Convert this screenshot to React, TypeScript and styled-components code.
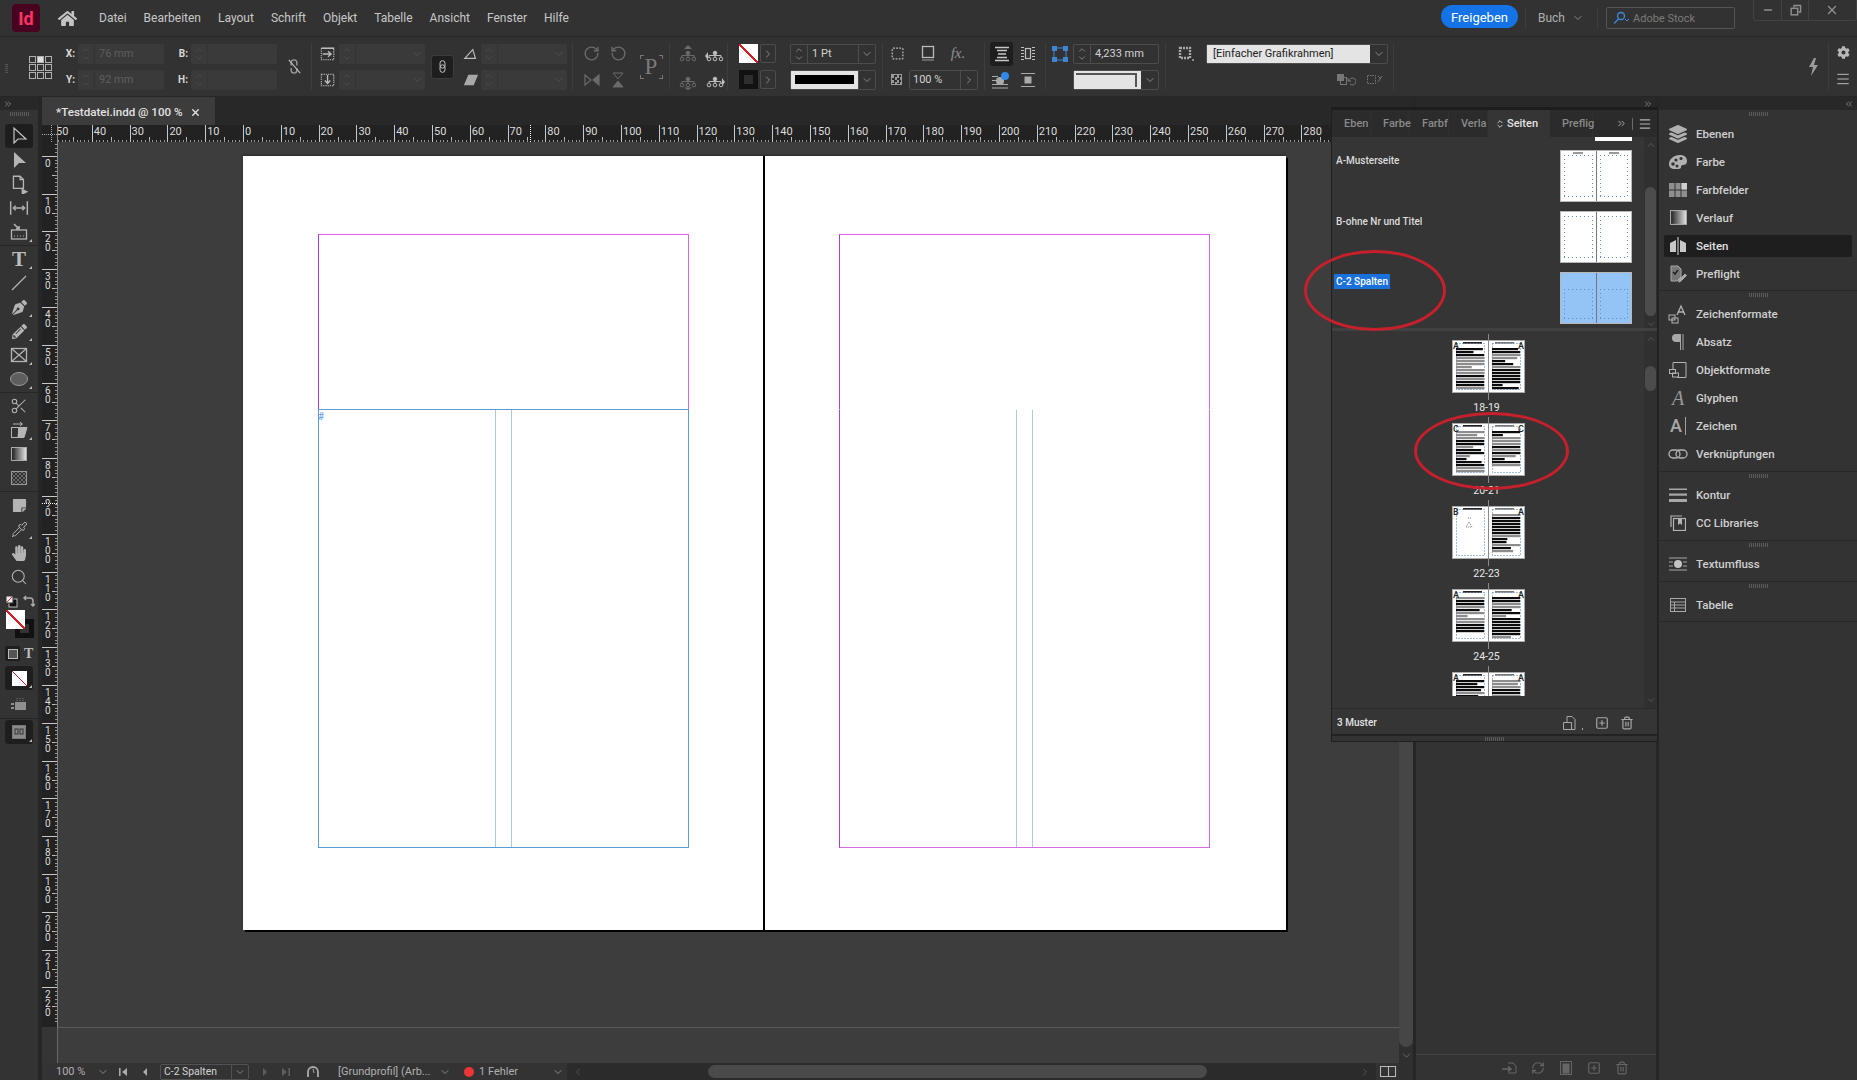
import React from "react";
import styled, { createGlobalStyle } from "styled-components";
import {
  ChevronDown,
  ChevronUp,
  ChevronRight,
  ChevronLeft,
  ChevronsRight,
  ChevronsLeft,
  ChevronsUpDown,
  Minus,
  X,
  Search,
  Scissors,
  Pipette,
  Trash2,
  SquarePlus,
  RefreshCw,
  RotateCw,
  RotateCcw,
  Menu,
} from "lucide-react";
import { FaHome, FaLayerGroup, FaPencilAlt, FaPenNib, FaHandPaper, FaStickyNote, FaCog } from "react-icons/fa";

const GlobalStyle = createGlobalStyle`
  html, body {
    margin: 0;
    height: 1080px;
    overflow: hidden;
    background: #333;
  }
  * { box-sizing: border-box; }
  #root { font-family: Roboto, "Liberation Sans", sans-serif; }
`;

const AppFrame = styled.div`
  width: 1857px;
  height: 1080px;
  display: flex;
  flex-direction: column;
  background: #333;
  color: #ccc;
`;

/* ---------- small svg helpers ---------- */
const G = ({ s = 18, children, c = "currentColor", w = 1.2 }: { s?: number; children: React.ReactNode; c?: string; w?: number }) => (
  <svg width={s} height={s} viewBox="0 0 18 18" fill="none" stroke={c} strokeWidth={w}>
    {children}
  </svg>
);

const Chev = ({ dim }: { dim?: boolean }) => <ChevronDown size={12} strokeWidth={1.4} color={dim ? "#5a5a5a" : "#aaa"} />;

/* ---------- title bar ---------- */
const TitleBar = styled.header`
  height: 37px;
  flex: none;
  display: flex;
  align-items: flex-start;
  background: #323232;
  border-bottom: 1px solid #262626;
`;
const Logo = styled.div`
  width: 28px;
  height: 28px;
  margin: 4px 0 0 12px;
  border-radius: 4px;
  background: #49021f;
  color: #ff3366;
  font-size: 18px;
  font-weight: 700;
  display: flex;
  align-items: center;
  justify-content: center;
`;
const HomeButton = styled.div`
  width: 20px;
  margin: 9px 0 0 17px;
  color: #c4c4c4;
  display: flex;
  justify-content: center;
`;
const MenuList = styled.nav`
  display: flex;
  gap: 17px;
  margin: 11px 0 0 22px;
  font-size: 12px;
  line-height: 14px;
  color: #c8c8c8;
`;
const TitleRight = styled.div`
  margin-left: auto;
  display: flex;
  align-items: flex-start;
`;
const ShareButton = styled.div`
  width: 77px;
  height: 23px;
  margin-top: 5px;
  padding-top: 1px;
  border-radius: 12px;
  background: #1473e6;
  color: #fff;
  font-size: 13px;
  display: flex;
  align-items: center;
  justify-content: center;
`;
const TitleSep = styled.div<{ $ml: number }>`
  width: 1px;
  height: 20px;
  margin: 8px 0 0 ${(p) => p.$ml}px;
  background: #3e3e3e;
`;
const Workspace = styled.div`
  margin: 11px 0 0 12px;
  width: 46px;
  display: flex;
  align-items: center;
  justify-content: space-between;
  font-size: 12px;
  line-height: 14px;
  color: #b0b0b0;
`;
const StockSearch = styled.div`
  width: 129px;
  height: 22px;
  margin: 7px 0 0 8px;
  border: 1px solid #555;
  border-radius: 2px;
  display: flex;
  align-items: center;
  gap: 4px;
  padding-left: 6px;
  font-size: 11px;
  color: #7a7a7a;
`;
const WindowButtons = styled.div`
  display: flex;
  width: 104px;
  height: 21px;
  margin-left: 18px;
  border: 1px solid #424242;
  border-top: 0;
  border-radius: 0 0 3px 3px;
  color: #8f8f8f;
`;
const WindowButton = styled.div<{ $w: number }>`
  width: ${(p) => p.$w}px;
  display: flex;
  align-items: center;
  justify-content: center;
  & + & { border-left: 1px solid #424242; }
`;

/* ---------- control bar ---------- */
const ControlBar = styled.div`
  height: 60px;
  flex: none;
  display: flex;
  background: #323232;
  border-bottom: 1px solid #262626;
  position: relative;
`;
const Section = styled.div<{ $w: number; $cols?: string; $pl?: number }>`
  width: ${(p) => p.$w}px;
  flex: none;
  padding-left: ${(p) => p.$pl ?? 0}px;
  margin: 6px 0;
  border-right: 1px solid #3d3d3d;
  display: grid;
  grid-template-columns: ${(p) => p.$cols ?? "1fr"};
  grid-auto-rows: 20px;
  row-gap: 6px;
  align-items: center;
  justify-items: center;
  align-content: center;
`;
const Span2 = styled.div<{ $start?: boolean }>`
  grid-row: span 2;
  justify-self: ${(p) => (p.$start ? "start" : "center")};
  display: flex;
  align-items: center;
  justify-content: center;
  color: #9a9a9a;
`;
const Cell = styled.div<{ $dim?: boolean }>`
  display: flex;
  align-items: center;
  justify-content: center;
  color: ${(p) => (p.$dim ? "#6a6a6a" : "#bdbdbd")};
`;
const AxisLabel = styled.div`
  font-size: 10px;
  font-weight: 700;
  color: #d8d8d8;
  justify-self: end;
  padding-right: 3px;
`;
const Field = styled.div<{ $w?: number; $off?: boolean }>`
  width: ${(p) => p.$w ?? 86}px;
  height: 20px;
  display: flex;
  align-items: center;
  border-radius: 2px;
  background: ${(p) => (p.$off ? "#3a3a3a" : "transparent")};
  border: ${(p) => (p.$off ? "0" : "1px solid #4d4d4d")};
  font-size: 11px;
  color: ${(p) => (p.$off ? "#5f5f5f" : "#d2d2d2")};
`;
const Spinner = styled.div<{ $off?: boolean }>`
  width: 17px;
  height: 100%;
  flex: none;
  margin-right: 4px;
  border-right: 1px solid ${(p) => (p.$off ? "#343434" : "#4d4d4d")};
  display: flex;
  flex-direction: column;
  align-items: center;
  justify-content: center;
  color: ${(p) => (p.$off ? "#5a5a5a" : "#b5b5b5")};
  svg { margin: -1px 0; }
`;
const FieldArrow = styled.div<{ $line?: boolean }>`
  width: 17px;
  height: 100%;
  margin-left: auto;
  flex: none;
  display: flex;
  align-items: center;
  justify-content: center;
  border-left: ${(p) => (p.$line ? "1px solid #4d4d4d" : "0")};
`;
const Stack = styled.div`
  width: 100%;
  display: flex;
  flex-direction: column;
  gap: 6px;
  justify-content: center;
`;
const StackRow = styled.div<{ $pl?: number }>`
  height: 20px;
  display: flex;
  align-items: center;
  padding-left: ${(p) => p.$pl ?? 0}px;
`;
const RowIcon = styled(Cell)<{ $w: number }>`
  width: ${(p) => p.$w}px;
  flex: none;
`;
const StackSection = styled.div<{ $w: number }>`
  width: ${(p) => p.$w}px;
  flex: none;
  margin: 6px 0;
  border-right: 1px solid #3d3d3d;
  display: flex;
`;
const LinkButton = styled.div`
  width: 23px;
  height: 24px;
  background: #1e1e1e;
  border-radius: 3px;
  border: 1px solid #3c3c3c;
  display: flex;
  align-items: center;
  justify-content: center;
  color: #c4c4c4;
`;
const NoneSwatch = styled.div<{ $size: number }>`
  width: ${(p) => p.$size}px;
  height: ${(p) => p.$size}px;
  background: linear-gradient(to top right, #fff 0 47%, #d81c24 47% 53%, #fff 53%);
`;
const BlackSwatch = styled.div`
  width: 19px;
  height: 19px;
  background: #121212;
  display: flex;
  align-items: center;
  justify-content: center;
  &::after {
    content: "";
    width: 9px;
    height: 9px;
    background: #2e2e2e;
  }
`;
const FlyoutArrow = styled.div`
  width: 16px;
  height: 19px;
  border: 1px solid #4d4d4d;
  border-radius: 2px;
  display: flex;
  align-items: center;
  justify-content: center;
  color: #aaa;
`;
const LinePreview = styled.div`
  flex: 1;
  height: 100%;
  background: #e4e4e4;
  display: flex;
  align-items: center;
  padding: 0 4px;
  &::after {
    content: "";
    height: 9px;
    width: 100%;
    background: #000;
  }
`;
const CornerPreview = styled.div`
  flex: 1;
  height: 100%;
  background:
    linear-gradient(#555, #555) 2px 2px / calc(100% - 6px) 2px no-repeat,
    linear-gradient(#555, #555) calc(100% - 4px) 2px / 2px 14px no-repeat,
    #e4e4e4;
`;
const FormatSelect = styled.div`
  width: 182px;
  height: 20px;
  display: flex;
  border: 1px solid #4d4d4d;
  border-radius: 2px;
  font-size: 11px;
  color: #222;
`;
const FormatValue = styled.div`
  width: 164px;
  background: #e4e4e4;
  padding-left: 6px;
  line-height: 18px;
`;
const SelectedTool = styled.div`
  width: 23px;
  height: 24px;
  background: #1e1e1e;
  border-radius: 3px;
  display: flex;
  align-items: center;
  justify-content: center;
  color: #c8c8c8;
`;
const BarGrip = styled.div`
  position: absolute;
  left: 5px;
  top: 27px;
  width: 3px;
  height: 9px;
  background: repeating-linear-gradient(to bottom, #555 0 1px, transparent 1px 2px);
`;
const BarEnd = styled.div`
  margin-left: auto;
  display: flex;
`;
const BoltCell = styled.div`
  width: 35px;
  margin: 6px 0;
  padding-left: 6px;
  border-right: 1px solid #3d3d3d;
  display: flex;
  align-items: center;
  justify-content: center;
  color: #9c9c9c;
`;
const EndStack = styled.div`
  width: 28px;
  display: flex;
  flex-direction: column;
  align-items: center;
  justify-content: center;
  gap: 12px;
  color: #b8b8b8;
`;
const SerifP = styled.span`
  font-family: "Liberation Serif", serif;
  font-size: 23px;
  color: #7a7a7a;
`;
const PBox = styled.div`
  width: 25px;
  height: 26px;
  position: relative;
  display: flex;
  align-items: center;
  justify-content: center;
  border: 1px solid transparent;
  background:
    linear-gradient(#777, #777) 0 0 / 4px 1px no-repeat,
    linear-gradient(#777, #777) 0 0 / 1px 4px no-repeat,
    linear-gradient(#777, #777) 100% 0 / 4px 1px no-repeat,
    linear-gradient(#777, #777) 100% 0 / 1px 4px no-repeat,
    linear-gradient(#777, #777) 0 100% / 4px 1px no-repeat,
    linear-gradient(#777, #777) 0 100% / 1px 4px no-repeat,
    linear-gradient(#777, #777) 100% 100% / 4px 1px no-repeat,
    linear-gradient(#777, #777) 100% 100% / 1px 4px no-repeat;
`;
const FxText = styled.span`
  font-family: "Liberation Serif", serif;
  font-style: italic;
  font-size: 15px;
  color: #909090;
`;
const Checker = styled.div`
  width: 11px;
  height: 11px;
  border: 1px solid #999;
  background: repeating-conic-gradient(#2c2c2c 0 25%, #9a9a9a 0 50%) 0 0 / 5px 5px;
`;

/* ---------- main workspace ---------- */
const Main = styled.div`
  flex: 1;
  min-height: 0;
  display: flex;
  position: relative;
`;
const Toolbar = styled.aside`
  width: 38px;
  flex: none;
  background: #333;
  display: flex;
  flex-direction: column;
  color: #b4b4b4;
`;
const DockStrip = styled.div<{ $align?: string }>`
  height: 13px;
  flex: none;
  background: #282828;
  display: flex;
  align-items: center;
  justify-content: ${(p) => p.$align ?? "flex-start"};
  padding: 0 3px;
  color: #8c8c8c;
`;
const Grip = styled.div`
  width: 19px;
  height: 4px;
  margin: 0 auto;
  background: repeating-linear-gradient(to right, #5c5c5c 0 1px, transparent 1px 2px);
`;
const ToolGrip = styled(Grip)`
  margin: 2px auto 8px;
`;
const ToolGroup = styled.div`
  border-bottom: 1px solid #262626;
  padding-bottom: 1px;
  margin-bottom: 1px;
`;
const Tool = styled.div<{ $on?: boolean; $corner?: boolean }>`
  width: 28px;
  height: 24px;
  margin: 0 auto;
  display: flex;
  align-items: center;
  justify-content: center;
  border-radius: 3px;
  position: relative;
  flex: none;
  background: ${(p) => (p.$on ? "#1e1e1e" : "transparent")};
  &::after {
    content: "";
    display: ${(p) => (p.$corner ? "block" : "none")};
    position: absolute;
    right: 1px;
    bottom: 2px;
    border-left: 3px solid transparent;
    border-bottom: 3px solid #bbb;
  }
`;
const TypeGlyph = styled.span`
  font-family: "Liberation Serif", serif;
  font-weight: 700;
  font-size: 21px;
  line-height: 1;
  color: #bdbdbd;
`;
const SwapRow = styled.div`
  display: flex;
  justify-content: space-between;
  padding: 6px 3px 0 5px;
  height: 20px;
`;
const ColourStack = styled.div`
  height: 31px;
  margin-top: 1px;
  padding-left: 6px;
  position: relative;
`;
const StrokeBox = styled.div`
  position: absolute;
  left: 15px;
  top: 9px;
  width: 19px;
  height: 19px;
  border: 5px solid #111;
  background: #333;
`;
const FillBox = styled(NoneSwatch)`
  position: relative;
  z-index: 1;
`;
const FormatRow = styled.div`
  display: flex;
  align-items: center;
  height: 15px;
  margin: 5px 0 5px 5px;
  gap: 2px;
`;
const ContainerBox = styled.div`
  width: 15px;
  height: 15px;
  background: #1e1e1e;
  border-radius: 2px;
  display: flex;
  align-items: center;
  justify-content: center;
  &::after {
    content: "";
    width: 8px;
    height: 8px;
    border: 1px solid #bbb;
    background: #555;
  }
`;
const SmallT = styled(TypeGlyph)`
  font-size: 14px;
  margin-left: 2px;
`;
const LayoutGroup = styled(ToolGroup)`
  margin-top: 3px;
`;

const DockGap = styled.div`
  width: 4px;
  flex: none;
  background: #262626;
`;
const PanelGap = styled.div`
  width: 3px;
  flex: none;
  background: #262626;
`;

const DocColumn = styled.section`
  width: 1371px;
  flex: none;
  display: flex;
  flex-direction: column;
  min-width: 0;
`;
const TabStrip = styled.div`
  height: 28px;
  flex: none;
  background: #282828;
  display: flex;
`;
const DocTab = styled.div`
  width: 173px;
  background: #3c3c3c;
  padding: 2px 0 0 14px;
  display: flex;
  align-items: center;
  gap: 7px;
  color: #e2e2e2;
  font-size: 11.6px;
  font-weight: 500;
`;
const RulerRow = styled.div`
  height: 17px;
  flex: none;
  display: flex;
  background: #222;
  overflow: hidden;
`;
const RulerOrigin = styled.div`
  width: 16px;
  flex: none;
  position: relative;
  z-index: 1;
  background:
    repeating-linear-gradient(to right, #aaa 0 1px, transparent 1px 2px) 0 9px / 100% 1px no-repeat,
    repeating-linear-gradient(to bottom, #aaa 0 1px, transparent 1px 2px) 9px 0 / 1px 100% no-repeat,
    #222;
  border-right: 1px solid #888;
`;
const HScale = styled.div`
  margin-left: -4px;
  flex: none;
  display: flex;
  position: relative;
  width: 1400px;
  background:
    repeating-linear-gradient(to right, #999 0 1px, transparent 1px 3.78px) 0 100% / 100% 2px no-repeat,
    repeating-linear-gradient(to right, #bbb 0 1px, transparent 1px 18.9px) 0 100% / 100% 5px no-repeat;
`;
const HLabel = styled.div`
  width: 37.8px;
  flex: none;
  height: 17px;
  border-left: 1px solid #c8c8c8;
  padding-left: 1px;
  font-size: 11px;
  line-height: 14px;
  color: #dcdcdc;
`;
const HCursor = styled.div`
  position: absolute;
  left: 476px;
  top: 0;
  bottom: 0;
  width: 1px;
  background: repeating-linear-gradient(to bottom, #fff 0 1px, #222 1px 2px);
`;
const ViewRow = styled.div`
  flex: 1;
  min-height: 0;
  display: flex;
`;
const VRulerColumn = styled.div`
  width: 16px;
  flex: none;
  display: flex;
  flex-direction: column;
`;
const VRuler = styled.div`
  height: 885px;
  flex: none;
  overflow: hidden;
  background: #222;
  border-right: 1px solid #888;
`;
const VScale = styled.div`
  margin-top: -24px;
  position: relative;
  background:
    repeating-linear-gradient(to bottom, #999 0 1px, transparent 1px 3.78px) 100% 0 / 2px 100% no-repeat,
    repeating-linear-gradient(to bottom, #bbb 0 1px, transparent 1px 18.9px) 100% 0 / 5px 100% no-repeat;
`;
const VLabel = styled.div`
  height: 37.8px;
  border-top: 1px solid #c8c8c8;
  padding: 2px 0 0 3px;
  font-size: 10px;
  line-height: 9px;
  color: #dcdcdc;
`;
const VCursor = styled.div`
  position: absolute;
  top: 385px;
  left: 0;
  right: 0;
  height: 1px;
  background: repeating-linear-gradient(to right, #fff 0 1px, #222 1px 2px);
`;
const VFoot = styled.div`
  flex: 1;
  border-right: 1px solid #6a6a6a;
  background: #353535;
`;
const Canvas = styled.div`
  flex: 1;
  min-width: 0;
  background: #3d3d3d;
  display: flex;
  flex-direction: column;
`;
const Pasteboard = styled.div`
  height: 885px;
  flex: none;
  padding: 14px 0 0 185px;
  overflow: hidden;
`;
const PasteFoot = styled.div`
  flex: 1;
  border-top: 1px solid #5a5a5a;
`;
const Spread = styled.div`
  width: 1043px;
  height: 774px;
  display: flex;
  background: #fff;
  box-shadow: 2px 2px 0 #000, 0 -1px 2px #2a2a2a;
`;
const Page = styled.div<{ $pl: number; $w: number }>`
  width: ${(p) => p.$w}px;
  flex: none;
  padding: 78px 0 0 ${(p) => p.$pl}px;
`;
const Spine = styled.div`
  width: 2px;
  flex: none;
  background: #000;
`;
const Frame = styled.div`
  width: 371px;
  height: 614px;
  display: flex;
  flex-direction: column;
`;
const UpperBox = styled.div`
  height: 175px;
  flex: none;
  border-top: 1px solid #e65ee8;
  border-right: 1px solid #d56be2;
  border-left: 1px solid #a63ee8;
`;
const LowerBox = styled.div<{ $mode: "text" | "master" }>`
  flex: 1;
  display: flex;
  position: relative;
  border-style: solid;
  border-width: 1px;
  border-color: ${(p) => (p.$mode === "text" ? "#5b9bd6" : "transparent #d56be2 #d56be2 #a63ee8")};
  background: ${(p) =>
    p.$mode === "text" ? "none" : "repeating-linear-gradient(to right, #888 0 1px, transparent 1px 3px) 0 -1px / 100% 1px no-repeat border-box"};
`;
const Gutter = styled.div`
  width: 17px;
  margin-left: 176px;
  border-left: 1px solid #aec8dc;
  border-right: 1px solid #aec8dc;
`;
const Hash = styled.span`
  position: absolute;
  left: -1px;
  top: 1px;
  font-size: 10px;
  font-weight: 500;
  color: #6da6ec;
`;

const VScroll = styled.div`
  width: 14px;
  flex: none;
  background: #2f2f2f;
  display: flex;
  flex-direction: column;
  align-items: center;
  color: #777;
`;
const VThumb = styled.div`
  width: 14px;
  flex: 1;
  background: #464646;
  border-radius: 0 0 7px 7px;
`;
const ScrollEnd = styled.div`
  height: 16px;
  flex: none;
  display: flex;
  align-items: center;
`;

const StatusBar = styled.div`
  height: 17px;
  flex: none;
  display: flex;
  align-items: center;
  background: #333;
  color: #b0b0b0;
  font-size: 11px;
`;
const Slot = styled.div<{ $w?: number; $ml?: number; $pl?: number }>`
  width: ${(p) => (p.$w ? `${p.$w}px` : "auto")};
  margin-left: ${(p) => p.$ml ?? 0}px;
  padding-left: ${(p) => p.$pl ?? 0}px;
  flex: none;
  display: flex;
  align-items: center;
  justify-content: ${(p) => (p.$pl ? "flex-start" : "center")};
  white-space: nowrap;
`;
const PageSelect = styled.div`
  width: 89px;
  height: 16px;
  margin-left: 8px;
  flex: none;
  display: flex;
  align-items: center;
  border: 1px solid #525252;
  border-radius: 2px;
  padding-left: 3px;
  font-size: 10.4px;
  color: #d4d4d4;
`;
const PageSelectArrow = styled.div`
  margin-left: auto;
  width: 17px;
  height: 100%;
  border-left: 1px solid #525252;
  display: flex;
  align-items: center;
  justify-content: center;
`;
const ErrorDot = styled.span`
  width: 10px;
  height: 10px;
  border-radius: 50%;
  background: #ee3535;
`;
const HScroll = styled.div`
  flex: 1;
  height: 100%;
  background: #2b2b2b;
  display: flex;
  align-items: center;
  margin-left: 3px;
  padding: 0 5px;
  color: #666;
`;
const HThumb = styled.div`
  width: 499px;
  height: 13px;
  margin-left: 124px;
  border-radius: 7px;
  background: #4a4a4a;
`;
const Pinned = styled.div`
  margin-left: auto;
  display: flex;
  align-items: center;
`;
const ViewIcon = styled.div`
  width: 16px;
  height: 11px;
  border: 1px solid #bbb;
  margin: 0 3px 0 4px;
  background: linear-gradient(#bbb, #bbb) center / 1px 100% no-repeat;
  flex: none;
`;
const ResizeCorner = styled.div`
  width: 14px;
  height: 100%;
  flex: none;
  background: #2f2f2f;
`;

const EmptyPanel = styled.section`
  width: 240px;
  flex: none;
  display: flex;
  flex-direction: column;
  background: #333;
`;
const EmptyBody = styled.div`
  flex: 1;
`;
const EmptyFooter = styled.div`
  height: 26px;
  flex: none;
  border-top: 1px solid #414141;
  display: grid;
  grid-template-columns: repeat(5, 28px);
  align-items: center;
  justify-items: center;
  padding-left: 80px;
  color: #666;
`;

/* ---------- right dock ---------- */
const Dock = styled.aside`
  flex: 1;
  display: flex;
  flex-direction: column;
  background: #333;
`;
const DockGroup = styled.div`
  padding: 2px 0 2.4px;
  border-bottom: 1px solid #272727;
  display: flex;
  flex-direction: column;
`;
const DockGrip = styled(Grip)`
  flex: none;
  margin-bottom: 3.5px;
`;
const DockItem = styled.div<{ $on?: boolean }>`
  height: 22px;
  margin: 3px 5px;
  padding-left: 2px;
  flex: none;
  display: flex;
  align-items: center;
  border-radius: 2px;
  background: ${(p) => (p.$on ? "#1e1e1e" : "transparent")};
  color: ${(p) => (p.$on ? "#e0e0e0" : "#d0d0d0")};
  font-size: 11.5px;
  font-weight: 500;
`;
const DockIcon = styled.span`
  width: 24px;
  height: 22px;
  margin-right: 6px;
  flex: none;
  display: flex;
  align-items: center;
  justify-content: center;
  color: #b0b0b0;
`;

/* ---------- pages panel (floats over the document) ---------- */
const PagesPanel = styled.div`
  position: absolute;
  left: 1331px;
  top: 10px;
  width: 327px;
  height: 635px;
  background: #353535;
  border: 1px solid #1f1f1f;
  border-top: 3px solid #1d1d1d;
  display: flex;
  flex-direction: column;
  font-size: 10px;
  font-weight: 500;
  color: #dcdcdc;
`;
const PanelTabs = styled.div`
  height: 27px;
  flex: none;
  display: flex;
  align-items: stretch;
  background: #2b2b2b;
  color: #8a8a8a;
`;
const PanelTab = styled.div<{ $w: number; $on?: boolean }>`
  width: ${(p) => p.$w}px;
  flex: none;
  white-space: nowrap;
  display: flex;
  align-items: center;
  gap: 2px;
  padding-left: ${(p) => (p.$on ? 7 : 12)}px;
  background: ${(p) => (p.$on ? "#353535" : "transparent")};
  color: ${(p) => (p.$on ? "#e4e4e4" : "#8a8a8a")};
  font-size: 11px;
  border-right: ${(p) => (p.$on ? "0" : "1px solid #303030")};
`;
const TabTools = styled.div`
  margin-left: auto;
  display: flex;
  align-items: center;
  gap: 5px;
  padding-right: 5px;
  color: #b5b5b5;
`;
const TabDivider = styled.span`
  width: 1px;
  height: 12px;
  background: #6a6a6a;
`;
const MasterSection = styled.div`
  height: 194px;
  flex: none;
  display: flex;
  border-bottom: 3px solid #414141;
`;
const MasterList = styled.div`
  flex: 1;
  min-width: 0;
  display: flex;
  flex-direction: column;
  padding-top: 0;
`;
const MasterStub = styled.div`
  width: 37px;
  height: 4px;
  margin: 0 12px 9px auto;
  flex: none;
  background: #fff;
`;
const MasterRow = styled.div`
  height: 61px;
  flex: none;
  display: flex;
  justify-content: space-between;
  padding: 3px 12px 0 2px;
`;
const MasterName = styled.span<{ $on?: boolean }>`
  align-self: flex-start;
  padding: 1px 2px;
  line-height: 13px;
  background: ${(p) => (p.$on ? "#1b71db" : "transparent")};
  color: ${(p) => (p.$on ? "#fff" : "#dcdcdc")};
  margin-top: ${(p) => (p.$on ? "-1px" : "0")};
`;
const MasterThumb = styled.div`
  width: 72px;
  height: 52px;
  margin-top: -3px;
  display: flex;
  gap: 1px;
  padding: 0;
  border: 1px solid #b8b8b8;
  background: #777;
`;
const MasterHalf = styled.div<{ $on?: boolean; $tab?: boolean }>`
  flex: 1;
  --dots: repeating-linear-gradient(to right, #5d8fc2 0 1px, transparent 1px 4px);
  --dotsV: repeating-linear-gradient(to bottom, #5d8fc2 0 1px, transparent 1px 4px);
  background:
    var(--dots) 3px ${(p) => (p.$on ? 16 : 4)}px / calc(100% - 6px) 1px no-repeat,
    var(--dots) 3px calc(100% - 4px) / calc(100% - 6px) 1px no-repeat,
    var(--dotsV) 3px ${(p) => (p.$on ? 16 : 4)}px / 1px calc(100% - ${(p) => (p.$on ? 20 : 8)}px) no-repeat,
    var(--dotsV) calc(100% - 3px) ${(p) => (p.$on ? 16 : 4)}px / 1px calc(100% - ${(p) => (p.$on ? 20 : 8)}px) no-repeat,
    ${(p) => (p.$tab ? "linear-gradient(#999, #999) 12px 1px / 10px 2px no-repeat," : "")}
    ${(p) => (p.$on ? "#94c3f5" : "#fff")};
`;
const ScrollRail = styled.div`
  width: 13px;
  flex: none;
  display: flex;
  flex-direction: column;
  align-items: center;
  color: #666;
  background: #303030;
`;
const RailThumb = styled.div<{ $top: number; $h: number }>`
  width: 11px;
  height: ${(p) => p.$h}px;
  margin-top: ${(p) => p.$top}px;
  border-radius: 6px;
  background: #4c4c4c;
  flex: none;
`;
const RailEnd = styled.div<{ $bottom?: boolean }>`
  height: 16px;
  flex: none;
  display: flex;
  align-items: center;
  margin-top: ${(p) => (p.$bottom ? "auto" : "0")};
`;
const PagesSection = styled.div`
  flex: 1;
  min-height: 0;
  display: flex;
  background: #353535;
`;
const PagesList = styled.div`
  flex: 1;
  min-width: 0;
  height: 365px;
  overflow: hidden;
  padding: 3px 0 0 120px;
`;
const SpreadBlock = styled.div`
  width: 73px;
  height: 83px;
  display: flex;
  flex-direction: column;
  align-items: center;
`;
const SpreadFrame = styled.div`
  width: 73px;
  height: 66px;
  flex: none;
  padding-top: 6px;
  position: relative;
  &::before {
    content: "";
    position: absolute;
    left: 36px;
    top: 0;
    bottom: 0;
    width: 1px;
    background: #8a8a8a;
  }
  svg { display: block; position: relative; }
`;
const SpreadLabel = styled.div`
  font-size: 10.5px;
  font-weight: 400;
  line-height: 15px;
  margin-right: 4px;
  color: #e8e8e8;
`;
const PanelFooter = styled.div`
  height: 26px;
  flex: none;
  padding: 2px 0 0 5px;
  border-top: 1px solid #2a2a2a;
  display: flex;
  align-items: center;
  color: #e2e2e2;
`;
const FooterTools = styled.div`
  margin-left: auto;
  padding-right: 23px;
  display: flex;
  align-items: center;
  gap: 11px;
  color: #a8a8a8;
`;
const PanelResize = styled.div`
  height: 7px;
  flex: none;
  border-top: 2px solid #222;
  background: #333;
  display: flex;
  align-items: center;
`;
const Marker = styled.div<{ $l: number; $t: number; $w: number; $h: number }>`
  position: absolute;
  left: ${(p) => p.$l}px;
  top: ${(p) => p.$t}px;
  width: ${(p) => p.$w}px;
  height: ${(p) => p.$h}px;
  border: 3px solid #c6202c;
  border-radius: 50%;
`;

/* ---------- page thumbnails ---------- */
function bars(seed: number, x: number, fromY: number, count: number) {
  let s = seed;
  const next = () => (s = (s * 9301 + 49297) % 233280) / 233280;
  const out: React.ReactNode[] = [];
  for (let i = 0; i < count; i++) {
    const w = 10 + next() * 19;
    const dark = next() > 0.42;
    out.push(
      <rect key={`${seed}-${i}`} x={x} y={fromY + i * 3} width={next() > 0.35 ? 28 : w} height={2.2} fill={dark ? "#0c0c0c" : "#8c8c8c"} />,
    );
  }
  return out;
}

interface SpreadData {
  label: string;
  left: string;
  right: string;
  seeds: [number, number];
  counts?: [number, number];
}

const SPREADS: SpreadData[] = [
  { label: "18-19", left: "A", right: "A", seeds: [17, 41], counts: [14, 14] },
  { label: "20-21", left: "C", right: "C", seeds: [83, 127], counts: [14, 12] },
  { label: "22-23", left: "B", right: "A", seeds: [0, 59], counts: [0, 13] },
  { label: "24-25", left: "A", right: "A", seeds: [211, 5], counts: [12, 14] },
  { label: "", left: "A", right: "A", seeds: [97, 33], counts: [14, 14] },
];

const SpreadThumb = ({ data }: { data: SpreadData }) => (
  <svg width="73" height="53" viewBox="0 0 73 53">
    <rect x="0.5" y="0.5" width="72" height="52" fill="#fff" stroke="#aaa" />
    <line x1="36.5" y1="0" x2="36.5" y2="53" stroke="#8a8a8a" />
    <rect x="4.5" y="3.5" width="28" height="46" fill="none" stroke="#3c78b8" strokeDasharray="1 2" />
    <rect x="40.5" y="3.5" width="28" height="46" fill="none" stroke="#3c78b8" strokeDasharray="1 2" />
    <rect x="11" y="2" width="19" height="1.6" fill="#222" />
    <rect x="43" y="2" width="19" height="1.6" fill="#777" />
    {bars(data.seeds[0], 4, 8, data.counts?.[0] ?? 0)}
    {bars(data.seeds[1], 40, 8, data.counts?.[1] ?? 0)}
    {data.counts?.[0] === 0 && <path d="M17 16l-3 5h6zM16 12h3" fill="none" stroke="#777" strokeDasharray="1 1" />}
    <text x="1" y="9" fontSize="9" fontFamily="Roboto" fill="#222">{data.left}</text>
    <text x="66" y="9" fontSize="9" fontFamily="Roboto" fill="#222">{data.right}</text>
  </svg>
);

/* ---------- drawn icons ---------- */
const ReferencePoint = () => (
  <svg width="26" height="26" viewBox="0 0 26 26" fill="none" stroke="#b0b0b0">
    {[2, 10, 18].map((y) =>
      [1, 9, 17].map((x) => (
        <rect key={`${x}-${y}`} x={x + 0.5} y={y + 0.5} width="6" height="6" fill={x === 9 && y === 2 ? "#e0e0e0" : "none"} />
      )),
    )}
  </svg>
);
const BrokenChain = () => (
  <G s={17}>
    <path d="M5.500 8V5a3 3 0 0 1 6 0v3M5.500 10.500V13a3 3 0 0 0 6 0v-2.500" strokeWidth="1.500" />
    <path d="M3 2l12 14" stroke="#bbb" />
  </G>
);
const Chain = () => (
  <G s={15}>
    <rect x="6" y="2" width="6" height="9" rx="3" />
    <rect x="6" y="7" width="6" height="9" rx="3" />
  </G>
);
const ScaleX = () => (
  <G s={16}>
    <rect x="1.500" y="2.500" width="14" height="13" strokeDasharray="1.500 1" />
    <path d="M2 2.500h14M3 9h9M9 6l3.500 3-3.500 3" strokeWidth="1.500" />
  </G>
);
const ScaleY = () => (
  <G s={16}>
    <rect x="1.500" y="2.500" width="14" height="13" strokeDasharray="1.500 1" />
    <path d="M2 2.500h0M8.500 3.500v9M5.500 9.500l3 3.500 3-3.500" strokeWidth="1.500" />
  </G>
);
const AngleIcon = () => (
  <G s={16}>
    <path d="M2 14h12L11 4z" strokeWidth="1.300" />
  </G>
);
const ShearIcon = () => (
  <svg width="16" height="16" viewBox="0 0 18 18">
    <path d="M6 3h11l-5 12H1z" fill="#a8a8a8" />
  </svg>
);
const FlipH = () => (
  <G s={18}>
    <path d="M2 4l6 5-6 5z" />
    <path d="M16 4l-6 5 6 5z" fill="currentColor" />
  </G>
);
const FlipV = () => (
  <svg width="18" height="18" viewBox="0 0 18 18" fill="none" stroke="currentColor">
    <path d="M4 2l5 6 5-6z" />
    <path d="M4 16l5-6 5 6z" fill="currentColor" />
  </svg>
);
const OrgTree = ({ arrow }: { arrow: "up" | "down" | "left" | "right" }) => (
  <svg width="20" height="20" viewBox="0 0 20 20" fill="none" stroke="currentColor">
    <circle cx="10" cy="9" r="1.800" fill="currentColor" />
    <circle cx="4" cy="15" r="1.800" />
    <circle cx="10" cy="15" r="1.800" />
    <circle cx="16" cy="15" r="1.800" />
    <path d="M10 10v3M4 13v-1.500h12V13" />
    {arrow === "up" && <path d="M6 5l4-4 4 4z" fill="currentColor" stroke="none" />}
    {arrow === "down" && <path d="M6 17.500h8l-4 2.500z" fill="currentColor" stroke="none" />}
    {arrow === "left" && <path d="M0 12l3-4v8z" fill="currentColor" stroke="none" />}
    {arrow === "right" && <path d="M20 12l-3-4v8z" fill="currentColor" stroke="none" />}
  </svg>
);
const DottedFrame = () => (
  <G s={16}>
    <rect x="2.500" y="2.500" width="12" height="12" rx="1" strokeDasharray="2 1.500" strokeWidth="1.400" />
  </G>
);
const ShadowFrame = () => (
  <svg width="16" height="18" viewBox="0 0 16 18" fill="none">
    <rect x="2.500" y="1.500" width="11" height="11" stroke="#bbb" strokeWidth="1.300" />
    <rect x="2" y="14" width="12" height="2" fill="#666" />
  </svg>
);
const AlignCenterLines = () => (
  <G s={18}>
    <path d="M2 2.500h14M2 15.500h14M4 5.500h10M4 12.500h10M5 9h8" strokeWidth="1.300" />
  </G>
);
const WrapBox = () => (
  <G s={18}>
    <path d="M2 2.500h3M2 5.500h3M2 8.500h3M2 11.500h3M2 14.500h3M13 2.500h3M13 5.500h3M13 8.500h3M13 11.500h3M13 14.500h3" />
    <rect x="6.500" y="3.500" width="5" height="10" />
  </G>
);
const BalanceIcon = () => (
  <svg width="24" height="20" viewBox="0 0 24 20" fill="none" stroke="#aaa">
    <path d="M2 6.500h6M2 10.500h6M2 14.500h16M2 18h16" />
    <circle cx="10" cy="11" r="4" fill="#aaa" stroke="none" />
    <circle cx="15" cy="6" r="4" fill="#2f8ae8" stroke="none" />
  </svg>
);
const SpanIcon = () => (
  <svg width="18" height="18" viewBox="0 0 18 18" fill="none" stroke="#aaa">
    <path d="M2 2.500h14M2 15.500h14" />
    <rect x="6" y="6" width="6" height="6" fill="#aaa" />
  </svg>
);
const OffsetIcon = () => (
  <svg width="18" height="18" viewBox="0 0 18 18" fill="none">
    <rect x="3" y="3" width="12" height="12" stroke="#3e86d2" />
    {[1, 12].flatMap((x) => [1, 12].map((y) => <rect key={`${x}${y}`} x={x} y={y} width="5" height="5" fill="#3e86d2" />))}
  </svg>
);
const GridFrame = () => (
  <svg width="18" height="18" viewBox="0 0 18 18" fill="none" stroke="#a8a8a8" strokeDasharray="2 1">
    <rect x="3" y="3" width="10" height="10" strokeWidth="2.400" />
    <path d="M15 15h2" strokeWidth="1.500" strokeDasharray="none" />
  </svg>
);
const RestoreFormat = () => (
  <svg width="20" height="14" viewBox="0 0 20 14" fill="none" stroke="#777">
    <rect x="1.500" y="1.500" width="6" height="6" fill="#777" />
    <rect x="4.500" y="4.500" width="6" height="7" />
    <path d="M13 8a3.500 3.500 0 1 1 1 3M12 5v3h3" />
  </svg>
);
const ClearFormat = () => (
  <svg width="18" height="14" viewBox="0 0 18 14" fill="none" stroke="#777">
    <rect x="1.500" y="2.500" width="8" height="8" strokeDasharray="1.500 1" />
    <path d="M12 9l4-6M12 3l3 3" />
  </svg>
);
const StockIcon = () => (
  <svg width="16" height="14" viewBox="0 0 16 14" fill="none" stroke="#3b8de0" strokeWidth="1.300">
    <circle cx="8" cy="5" r="3.500" />
    <path d="M5.500 8L1 12.500" />
    <path d="M12 8l2 2 2-2" strokeWidth="1" />
  </svg>
);
const Bolt = () => (
  <svg width="12" height="18" viewBox="0 0 12 18">
    <path d="M6 0l-5 9h4l-2 9 7-11H6l2-7z" fill="#9c9c9c" />
  </svg>
);
const ArrowOutline = () => (
  <svg width="18" height="20" viewBox="0 0 18 20" fill="none" stroke="#c4c4c4" strokeWidth="1.200">
    <path d="M4 2v15l4-4h8z" />
  </svg>
);
const ArrowFilled = () => (
  <svg width="18" height="20" viewBox="0 0 18 20">
    <path d="M4 2v16l5-5h7z" fill="#b4b4b4" />
  </svg>
);
const PageTool = () => (
  <G s={20}>
    <path d="M4 2h6l3 3v8H4z" />
    <path d="M10 2v3h3" />
    <path d="M12 14v4l4-2z" fill="currentColor" />
  </G>
);
const GapTool = () => (
  <G s={20} w={1.300}>
    <path d="M1.500 3v12M16.500 3v12M4 9h10" />
    <path d="M6 7L4 9l2 2M12 7l2 2-2 2" />
  </G>
);
const CollectorTool = () => (
  <svg width="18" height="18" viewBox="0 0 18 18" fill="none" stroke="#b4b4b4">
    <rect x="1.500" y="7" width="15" height="9" strokeWidth="1.300" />
    <path d="M4 10h.1M8 10h.1M12 10h.1M4 13h10" strokeDasharray="1 2" />
    <path d="M4 1l5 5M9 3v3H6" strokeWidth="1.500" />
  </svg>
);
const LineTool = () => (
  <G s={18}>
    <path d="M2 16L16 2" strokeWidth="1.300" />
  </G>
);
const FrameTool = () => (
  <G s={18}>
    <rect x="1.500" y="2.500" width="15" height="13" strokeWidth="1.300" />
    <path d="M1.500 2.500l15 13M16.500 2.500l-15 13" />
  </G>
);
const EllipseTool = () => (
  <svg width="20" height="16" viewBox="0 0 20 16">
    <ellipse cx="10" cy="8" rx="8.500" ry="6.500" fill="#5e5e5e" stroke="#999" />
  </svg>
);
const TransformTool = () => (
  <svg width="18" height="18" viewBox="0 0 18 18" fill="none" stroke="#b4b4b4">
    <path d="M3 3h9M10 1l2.500 2-2.500 2" />
    <rect x="1.500" y="6.500" width="7" height="10" />
    <path d="M9 6.500h8l-3 10H8z" fill="#b4b4b4" />
  </svg>
);
const GradientBox = ({ w = 16, h = 14 }: { w?: number; h?: number }) => (
  <svg width={w} height={h} viewBox="0 0 16 14">
    <defs>
      <linearGradient id={`grd${w}`}>
        <stop offset="0" stopColor="#1c1c1c" />
        <stop offset="1" stopColor="#e8e8e8" />
      </linearGradient>
    </defs>
    <rect x="0.500" y="0.500" width="15" height="13" fill={`url(#grd${w})`} stroke="#aaa" />
  </svg>
);
const FeatherTool = () => (
  <svg width="16" height="14" viewBox="0 0 16 14">
    <defs>
      <pattern id="feather" width="4" height="4" patternUnits="userSpaceOnUse">
        <rect width="4" height="4" fill="#6a6a6a" />
        <rect width="2" height="2" fill="#2c2c2c" />
        <rect x="2" y="2" width="2" height="2" fill="#2c2c2c" />
      </pattern>
    </defs>
    <rect x="0.500" y="0.500" width="15" height="13" fill="url(#feather)" stroke="#999" />
  </svg>
);
const SwapIcons = () => (
  <svg width="13" height="13" viewBox="0 0 13 13">
    <rect x="4" y="4" width="8" height="8" fill="#111" stroke="#bbb" />
    <rect x="1" y="1" width="7" height="7" fill="#eee" stroke="#333" />
    <path d="M2 7l5-5" stroke="#d33" />
  </svg>
);
const SwapArrow = () => (
  <svg width="12" height="13" viewBox="0 0 12 13" fill="none" stroke="#aaa" strokeWidth="1.500">
    <path d="M1 3h6a3 3 0 0 1 3 3v5M3 1L1 3l2 2M8 9l2 2 2-2" />
  </svg>
);
const LayoutTool = () => (
  <svg width="16" height="14" viewBox="0 0 16 14">
    <rect x="4" y="4" width="11" height="8" fill="#8f8f8f" />
    <path d="M6 3V0M9 3V0M12 3V0" stroke="#7a7a7a" strokeDasharray="1 1" />
    <rect x="0" y="5" width="3" height="2" fill="#8f8f8f" />
    <rect x="0" y="9" width="3" height="2" fill="#8f8f8f" />
  </svg>
);
const ScreenMode = () => (
  <svg width="14" height="14" viewBox="0 0 14 14">
    <rect x="0.500" y="0.500" width="13" height="13" fill="#8a8a8a" stroke="#777" />
    <rect x="3" y="4" width="3" height="5" fill="none" stroke="#333" />
    <rect x="8" y="4" width="3" height="5" fill="none" stroke="#333" />
  </svg>
);
const SkipFirst = () => (
  <svg width="10" height="10" viewBox="0 0 10 10" fill="#aaa">
    <rect x="1" y="1" width="1.600" height="8" />
    <path d="M9 1v8L4 5z" />
  </svg>
);
const StepLeft = () => (
  <svg width="8" height="10" viewBox="0 0 8 10" fill="#aaa">
    <path d="M6 1v8L2 5z" />
  </svg>
);
const StepRight = () => (
  <svg width="8" height="10" viewBox="0 0 8 10" fill="#5e5e5e">
    <path d="M2 1v8l4-4z" />
  </svg>
);
const SkipLast = () => (
  <svg width="10" height="10" viewBox="0 0 10 10" fill="#5e5e5e">
    <rect x="7.400" y="1" width="1.600" height="8" />
    <path d="M1 1v8l5-4z" />
  </svg>
);
const PreflightArc = () => (
  <svg width="16" height="14" viewBox="0 0 16 14" fill="none" stroke="#aaa" strokeWidth="1.800">
    <path d="M2 12V7a5 5 0 0 1 10 0v5" />
    <path d="M7 4l1 4" strokeWidth="1" />
  </svg>
);
const NewFromMaster = () => (
  <svg width="22" height="16" viewBox="0 0 22 16" fill="none" stroke="currentColor">
    <path d="M1.500 7.500h8v7h-8z" />
    <path d="M5 7V1.500h5l3 3v10H9" />
    <path d="M20 14h1" strokeWidth="2" />
  </svg>
);

const PaletteIcon = () => (
  <svg width="20" height="16" viewBox="0 0 20 16">
    <path d="M1 10c0-5 5-9 11-9 4 0 7 2 7 6 0 3-2 4-4 4-1.500 0-2 1-2 2 0 2-2 2-6 2-4 0-6-2-6-5z" fill="#b0b0b0" />
    <circle cx="5" cy="10" r="1.800" fill="#333" />
    <circle cx="9" cy="12" r="1.500" fill="#333" />
    <circle cx="8" cy="6" r="1.600" fill="#333" />
    <circle cx="13" cy="4.500" r="1.600" fill="#333" />
  </svg>
);
const PagesIcon = () => (
  <svg width="20" height="20" viewBox="0 0 20 20">
    <path d="M2 7l6-3v12H2zM18 7l-6-3v12h6z" fill="#c8c8c8" />
    <path d="M10 1v18" stroke="#ddd" />
  </svg>
);
const Preflight = () => (
  <svg width="18" height="20" viewBox="0 0 18 20" fill="none" stroke="#a8a8a8">
    <path d="M2 2h7l3 3v8l-4 4H2z" fill="#777" />
    <path d="M4 8l2 2 3-4" stroke="#222" strokeWidth="1.500" />
    <path d="M10 16l6-6 1.500 1.500-6 6-2 .5z" fill="#a8a8a8" />
  </svg>
);
const SwatchesIcon = () => (
  <svg width="18" height="14" viewBox="0 0 18 14">
    <rect width="18" height="14" fill="#8f8f8f" />
    <path d="M0 7h18M6 0v14M12 0v14" stroke="#333" />
    <rect x="12.500" width="5.500" height="6.500" fill="#cfcfcf" />
  </svg>
);
const CharFormats = () => (
  <svg width="22" height="20" viewBox="0 0 22 20" fill="none" stroke="#b4b4b4">
    <path d="M10 11l4-9 4 9M11.500 8h5" strokeWidth="1.300" />
    <rect x="2" y="11" width="6" height="5" />
    <rect x="5" y="14" width="6" height="5" />
  </svg>
);
const Pilcrow = () => (
  <svg width="14" height="18" viewBox="0 0 14 18" fill="none">
    <path d="M9 1H5a4 4 0 0 0 0 8h4z" fill="#a8a8a8" />
    <path d="M9.500 1v16M12 1v16" stroke="#a8a8a8" />
  </svg>
);
const ObjFormats = () => (
  <svg width="20" height="18" viewBox="0 0 20 18" fill="none" stroke="#b4b4b4">
    <path d="M5 8V1.500h13v15H9" />
    <rect x="1.500" y="8.500" width="6" height="4" />
    <rect x="4.500" y="12" width="6" height="4" />
  </svg>
);
const GlyphA = styled.span`
  font-family: "Liberation Serif", serif;
  font-style: italic;
  font-size: 20px;
  line-height: 1;
  color: #9a9a9a;
`;
const CharA = styled.span`
  font-size: 18px;
  line-height: 1;
  font-weight: 500;
  padding-right: 3px;
  border-right: 1px solid #a0a0a0;
  color: #a8a8a8;
`;
const LinkIcon = () => (
  <svg width="20" height="12" viewBox="0 0 20 12" fill="none" stroke="#b4b4b4" strokeWidth="1.300">
    <rect x="1" y="2" width="11" height="8" rx="4" />
    <rect x="8" y="2" width="11" height="8" rx="4" />
  </svg>
);
const StrokeIcon = () => (
  <svg width="18" height="14" viewBox="0 0 18 14" fill="#a8a8a8">
    <rect width="18" height="1.500" y="0.500" />
    <rect width="18" height="2.200" y="5.500" />
    <rect width="18" height="3" y="11" />
  </svg>
);
const LibrariesIcon = () => (
  <svg width="16" height="16" viewBox="0 0 16 16" fill="none" stroke="#b4b4b4" strokeWidth="1.200">
    <path d="M1 12V1h11" />
    <rect x="3.500" y="3.500" width="12" height="12" />
    <path d="M8 4v6l2-1.500L12 10V4z" fill="#b4b4b4" stroke="none" />
  </svg>
);
const WrapIcon = () => (
  <svg width="18" height="14" viewBox="0 0 18 14" stroke="#a8a8a8">
    <path d="M0 1h18M0 13h18M0 5h4M0 9h4M14 5h4M14 9h4" />
    <circle cx="9" cy="7" r="4" fill="#c4c4c4" stroke="none" />
  </svg>
);
const TableIcon = () => (
  <svg width="16" height="14" viewBox="0 0 16 14" fill="none" stroke="#a8a8a8">
    <rect x="0.500" y="0.500" width="15" height="13" />
    <path d="M0 4h16M0 7h16M0 10h16M4.500 4v10" />
  </svg>
);
const ImportPage = () => (
  <svg width="16" height="14" viewBox="0 0 16 14" fill="none" stroke="currentColor">
    <path d="M6 2h5l3 3v7H6" />
    <path d="M0 8h9M6 5.500L9 8l-3 2.500" strokeWidth="1.500" />
  </svg>
);
const SaveLibrary = () => (
  <svg width="12" height="14" viewBox="0 0 12 14" fill="none" stroke="currentColor">
    <rect x="0.500" y="0.500" width="11" height="13" />
    <rect x="3" y="3" width="6" height="9" fill="currentColor" />
  </svg>
);

const MENU = ["Datei", "Bearbeiten", "Layout", "Schrift", "Objekt", "Tabelle", "Ansicht", "Fenster", "Hilfe"];
const H_RULER = [50, 40, 30, 20, 10, 0];
for (let i = 10; i <= 280; i += 10) H_RULER.push(i);
const V_RULER = ["", "0"];
for (let i = 10; i <= 220; i += 10) V_RULER.push(String(i));

const DOCK_GROUPS: { label: string; icon: React.ReactNode; on?: boolean }[][] = [
  [
    { label: "Ebenen", icon: <FaLayerGroup size={18} /> },
    { label: "Farbe", icon: <PaletteIcon /> },
    { label: "Farbfelder", icon: <SwatchesIcon /> },
    { label: "Verlauf", icon: <GradientBox w={17} h={15} /> },
    { label: "Seiten", icon: <PagesIcon />, on: true },
    { label: "Preflight", icon: <Preflight /> },
  ],
  [
    { label: "Zeichenformate", icon: <CharFormats /> },
    { label: "Absatz", icon: <Pilcrow /> },
    { label: "Objektformate", icon: <ObjFormats /> },
    { label: "Glyphen", icon: <GlyphA>A</GlyphA> },
    { label: "Zeichen", icon: <CharA>A</CharA> },
    { label: "Verknüpfungen", icon: <LinkIcon /> },
  ],
  [
    { label: "Kontur", icon: <StrokeIcon /> },
    { label: "CC Libraries", icon: <LibrariesIcon /> },
  ],
  [{ label: "Textumfluss", icon: <WrapIcon /> }],
  [{ label: "Tabelle", icon: <TableIcon /> }],
];

const MASTERS = [
  { name: "A-Musterseite", tab: true },
  { name: "B-ohne Nr und Titel" },
  { name: "C-2 Spalten", on: true },
];

const SpinnerArrows = ({ off }: { off?: boolean }) => (
  <Spinner $off={off}>
    <ChevronUp size={10} strokeWidth={1.4} />
    <ChevronDown size={10} strokeWidth={1.4} />
  </Spinner>
);

const OffField = ({ value }: { value?: string }) => (
  <Field $off>
    <SpinnerArrows off />
    {value}
  </Field>
);
const OffSelect = () => (
  <Field $off>
    <SpinnerArrows off />
    <FieldArrow>
      <Chev dim />
    </FieldArrow>
  </Field>
);

export default function App() {
  return (
    <AppFrame>
      <GlobalStyle />
      <TitleBar>
        <Logo>Id</Logo>
        <HomeButton>
          <FaHome size={19} />
        </HomeButton>
        <MenuList>
          {MENU.map((item) => (
            <span key={item}>{item}</span>
          ))}
        </MenuList>
        <TitleRight>
          <ShareButton>Freigeben</ShareButton>
          <TitleSep $ml={7} />
          <Workspace>
            Buch
            <Chev />
          </Workspace>
          <TitleSep $ml={13} />
          <StockSearch>
            <StockIcon />
            Adobe Stock
          </StockSearch>
          <WindowButtons>
            <WindowButton $w={28}>
              <Minus size={12} strokeWidth={3} />
            </WindowButton>
            <WindowButton $w={27}>
              <G s={13} w={2}>
                <rect x="3" y="6" width="9" height="9" />
                <path d="M7 5V2h9v9h-3" />
              </G>
            </WindowButton>
            <WindowButton $w={49}>
              <X size={14} strokeWidth={2.4} />
            </WindowButton>
          </WindowButtons>
        </TitleRight>
      </TitleBar>

      <ControlBar>
        <BarGrip />
        <Section $w={312} $pl={28} $cols="36px 14px 86px 27px 86px 35px">
          <Span2 $start>
            <ReferencePoint />
          </Span2>
          <AxisLabel>X:</AxisLabel>
          <OffField value="76 mm" />
          <AxisLabel>B:</AxisLabel>
          <OffField />
          <Span2>
            <BrokenChain />
          </Span2>
          <AxisLabel>Y:</AxisLabel>
          <OffField value="92 mm" />
          <AxisLabel>H:</AxisLabel>
          <OffField />
        </Section>
        <Section $w={261} $pl={4} $cols="23px 86px 35px 21px 86px">
          <Cell>
            <ScaleX />
          </Cell>
          <OffSelect />
          <Span2>
            <LinkButton>
              <Chain />
            </LinkButton>
          </Span2>
          <Cell>
            <AngleIcon />
          </Cell>
          <OffSelect />
          <Cell>
            <ScaleY />
          </Cell>
          <OffSelect />
          <Cell>
            <ShearIcon />
          </Cell>
          <OffSelect />
        </Section>
        <Section $w={97} $pl={6} $cols="25px 28px 38px">
          <Cell $dim>
            <RotateCw size={17} />
          </Cell>
          <Cell $dim>
            <RotateCcw size={17} />
          </Cell>
          <Span2>
            <PBox>
              <SerifP>P</SerifP>
            </PBox>
          </Span2>
          <Cell $dim>
            <FlipH />
          </Cell>
          <Cell $dim>
            <FlipV />
          </Cell>
        </Section>
        <Section $w={58} $pl={4} $cols="27px 27px">
          <Cell $dim>
            <OrgTree arrow="up" />
          </Cell>
          <Cell>
            <OrgTree arrow="left" />
          </Cell>
          <Cell $dim>
            <OrgTree arrow="down" />
          </Cell>
          <Cell>
            <OrgTree arrow="right" />
          </Cell>
        </Section>
        <Section $w={155} $pl={11} $cols="19px 20px 12px 86px">
          <NoneSwatch $size={19} />
          <FlyoutArrow>
            <ChevronRight size={12} strokeWidth={1.4} />
          </FlyoutArrow>
          <span />
          <Field>
            <Spinner>
              <ChevronUp size={10} strokeWidth={1.4} />
              <ChevronDown size={10} strokeWidth={1.4} />
            </Spinner>
            1 Pt
            <FieldArrow $line>
              <Chev />
            </FieldArrow>
          </Field>
          <BlackSwatch />
          <FlyoutArrow>
            <ChevronRight size={12} strokeWidth={1.4} />
          </FlyoutArrow>
          <span />
          <Field>
            <LinePreview />
            <FieldArrow $line>
              <Chev />
            </FieldArrow>
          </Field>
        </Section>
        <StackSection $w={102}>
          <Stack>
            <StackRow>
              <RowIcon $w={30}>
                <DottedFrame />
              </RowIcon>
              <RowIcon $w={30}>
                <ShadowFrame />
              </RowIcon>
              <RowIcon $w={30}>
                <FxText>fx.</FxText>
              </RowIcon>
            </StackRow>
            <StackRow>
              <RowIcon $w={26}>
                <Checker />
              </RowIcon>
              <Field $w={69}>
                <Slot $pl={3}>100 %</Slot>
                <FieldArrow $line>
                  <ChevronRight size={12} strokeWidth={1.4} color="#aaa" />
                </FieldArrow>
              </Field>
            </StackRow>
          </Stack>
        </StackSection>
        <Section $w={61} $pl={5} $cols="23px 30px">
          <SelectedTool>
            <AlignCenterLines />
          </SelectedTool>
          <Cell>
            <WrapBox />
          </Cell>
          <Cell>
            <BalanceIcon />
          </Cell>
          <Cell>
            <SpanIcon />
          </Cell>
        </Section>
        <StackSection $w={120}>
          <Stack>
            <StackRow>
              <RowIcon $w={27}>
                <OffsetIcon />
              </RowIcon>
              <Field>
                <Spinner>
                  <ChevronUp size={10} strokeWidth={1.4} />
                  <ChevronDown size={10} strokeWidth={1.4} />
                </Spinner>
                4,233 mm
              </Field>
            </StackRow>
            <StackRow $pl={27}>
              <Field>
                <CornerPreview />
                <FieldArrow>
                  <Chev />
                </FieldArrow>
              </Field>
            </StackRow>
          </Stack>
        </StackSection>
        <StackSection $w={228}>
          <Stack>
            <StackRow>
              <RowIcon $w={40}>
                <GridFrame />
              </RowIcon>
              <FormatSelect>
                <FormatValue>[Einfacher Grafikrahmen]</FormatValue>
                <FieldArrow>
                  <Chev />
                </FieldArrow>
              </FormatSelect>
            </StackRow>
            <StackRow $pl={170}>
              <RestoreFormat />
              <Slot $ml={10}>
                <ClearFormat />
              </Slot>
            </StackRow>
          </Stack>
        </StackSection>
        <BarEnd>
          <BoltCell>
            <Bolt />
          </BoltCell>
          <EndStack>
            <FaCog size={13} />
            <Menu size={16} strokeWidth={1.5} />
          </EndStack>
        </BarEnd>
      </ControlBar>

      <Main>
        <Toolbar>
          <DockStrip>
            <ChevronsRight size={10} />
          </DockStrip>
          <ToolGrip />
          <ToolGroup>
            <Tool $on>
              <ArrowOutline />
            </Tool>
            <Tool>
              <ArrowFilled />
            </Tool>
            <Tool>
              <PageTool />
            </Tool>
            <Tool>
              <GapTool />
            </Tool>
            <Tool $corner>
              <CollectorTool />
            </Tool>
          </ToolGroup>
          <ToolGroup>
            <Tool $corner>
              <TypeGlyph>T</TypeGlyph>
            </Tool>
            <Tool>
              <LineTool />
            </Tool>
            <Tool $corner>
              <FaPenNib size={15} />
            </Tool>
            <Tool $corner>
              <FaPencilAlt size={15} />
            </Tool>
            <Tool $corner>
              <FrameTool />
            </Tool>
            <Tool $corner>
              <EllipseTool />
            </Tool>
          </ToolGroup>
          <ToolGroup>
            <Tool>
              <Scissors size={18} strokeWidth={1.4} />
            </Tool>
            <Tool $corner>
              <TransformTool />
            </Tool>
            <Tool>
              <GradientBox />
            </Tool>
            <Tool>
              <FeatherTool />
            </Tool>
          </ToolGroup>
          <Tool>
            <FaStickyNote size={15} />
          </Tool>
          <Tool $corner>
            <Pipette size={17} strokeWidth={1.4} />
          </Tool>
          <Tool>
            <FaHandPaper size={16} />
          </Tool>
          <Tool>
            <Search size={18} strokeWidth={1.4} />
          </Tool>
          <SwapRow>
            <SwapIcons />
            <SwapArrow />
          </SwapRow>
          <ColourStack>
            <FillBox $size={19} />
            <StrokeBox />
          </ColourStack>
          <FormatRow>
            <ContainerBox />
            <SmallT>T</SmallT>
          </FormatRow>
          <Tool $on $corner>
            <NoneSwatch $size={15} />
          </Tool>
          <LayoutGroup>
            <Tool>
              <LayoutTool />
            </Tool>
          </LayoutGroup>
          <Tool $on $corner>
            <ScreenMode />
          </Tool>
        </Toolbar>
        <DockGap />

        <DocColumn>
          <TabStrip>
            <DocTab>
              *Testdatei.indd @ 100 %
              <X size={11} strokeWidth={3} />
            </DocTab>
          </TabStrip>
          <RulerRow>
            <RulerOrigin />
            <HScale>
              {H_RULER.map((n, i) => (
                <HLabel key={i}>{n}</HLabel>
              ))}
              <HCursor />
            </HScale>
          </RulerRow>
          <ViewRow>
            <VRulerColumn>
              <VRuler>
                <VScale>
                  {V_RULER.map((n, i) => (
                    <VLabel key={i}>
                      {n.split("").map((d, j) => (
                        <div key={j}>{d}</div>
                      ))}
                    </VLabel>
                  ))}
                  <VCursor />
                </VScale>
              </VRuler>
              <VFoot />
            </VRulerColumn>
            <Canvas>
              <Pasteboard>
                <Spread>
                  <Page $pl={75} $w={520}>
                    <Frame>
                      <UpperBox />
                      <LowerBox $mode="text">
                        <Hash>#</Hash>
                        <Gutter />
                      </LowerBox>
                    </Frame>
                  </Page>
                  <Spine />
                  <Page $pl={74} $w={521}>
                    <Frame>
                      <UpperBox />
                      <LowerBox $mode="master">
                        <Gutter />
                      </LowerBox>
                    </Frame>
                  </Page>
                </Spread>
              </Pasteboard>
              <PasteFoot />
            </Canvas>
            <VScroll>
              <VThumb />
              <ScrollEnd>
                <ChevronDown size={13} strokeWidth={1.4} />
              </ScrollEnd>
            </VScroll>
          </ViewRow>
          <StatusBar>
            <Slot $w={55} $pl={14}>100 %</Slot>
            <Chev />
            <Slot $w={14} $ml={7}><SkipFirst /></Slot>
            <Slot $w={14} $ml={8}><StepLeft /></Slot>
            <PageSelect>
              C-2 Spalten
              <PageSelectArrow>
                <Chev />
              </PageSelectArrow>
            </PageSelect>
            <Slot $w={14} $ml={9}><StepRight /></Slot>
            <Slot $w={14} $ml={7}><SkipLast /></Slot>
            <Slot $w={18} $ml={12}><PreflightArc /></Slot>
            <Slot $w={92} $ml={14} $pl={1}>[Grundprofil] (Arb...</Slot>
            <Slot $w={12} $ml={10}><Chev /></Slot>
            <Slot $w={10} $ml={13}><ErrorDot /></Slot>
            <Slot $w={74} $ml={4} $pl={1}>1 Fehler</Slot>
            <Chev />
            <HScroll>
              <ChevronLeft size={12} strokeWidth={1.4} />
              <HThumb />
              <Pinned>
                <ChevronRight size={12} strokeWidth={1.4} />
              </Pinned>
            </HScroll>
            <ViewIcon />
            <ResizeCorner />
          </StatusBar>
        </DocColumn>
        <PanelGap />

        <EmptyPanel>
          <DockStrip $align="flex-end">
            <ChevronsRight size={10} />
          </DockStrip>
          <EmptyBody />
          <EmptyFooter>
            <ImportPage />
            <RefreshCw size={14} />
            <SaveLibrary />
            <SquarePlus size={14} />
            <Trash2 size={14} />
          </EmptyFooter>
        </EmptyPanel>
        <PanelGap />

        <Dock>
          <DockStrip $align="flex-end">
            <ChevronsLeft size={10} />
          </DockStrip>
          {DOCK_GROUPS.map((group, i) => (
            <DockGroup key={i}>
              <DockGrip />
              {group.map((item) => (
                <DockItem key={item.label} $on={item.on}>
                  <DockIcon>{item.icon}</DockIcon>
                  {item.label}
                </DockItem>
              ))}
            </DockGroup>
          ))}
        </Dock>

        <PagesPanel>
          <PanelTabs>
            <PanelTab $w={39}>Eben</PanelTab>
            <PanelTab $w={39}>Farbe</PanelTab>
            <PanelTab $w={39}>Farbf</PanelTab>
            <PanelTab $w={39}>Verla</PanelTab>
            <PanelTab $w={62} $on>
              <ChevronsUpDown size={10} />
              Seiten
            </PanelTab>
            <PanelTab $w={43}>Preflig</PanelTab>
            <TabTools>
              <ChevronsRight size={11} />
              <TabDivider />
              <Menu size={14} />
            </TabTools>
          </PanelTabs>
          <MasterSection>
            <MasterList>
              <MasterStub />
              {MASTERS.map((m) => (
                <MasterRow key={m.name}>
                  <MasterName $on={m.on}>{m.name}</MasterName>
                  <MasterThumb>
                    <MasterHalf $on={m.on} $tab={m.tab} />
                    <MasterHalf $on={m.on} $tab={m.tab} />
                  </MasterThumb>
                </MasterRow>
              ))}
            </MasterList>
            <ScrollRail>
              <RailEnd>
                <ChevronUp size={12} strokeWidth={1.4} />
              </RailEnd>
              <RailThumb $top={34} $h={129} />
              <RailEnd $bottom>
                <ChevronDown size={12} strokeWidth={1.4} />
              </RailEnd>
            </ScrollRail>
          </MasterSection>
          <PagesSection>
            <PagesList>
              {SPREADS.map((s, i) => (
                <SpreadBlock key={i}>
                  <SpreadFrame>
                    <SpreadThumb data={s} />
                  </SpreadFrame>
                  <SpreadLabel>{s.label}</SpreadLabel>
                </SpreadBlock>
              ))}
            </PagesList>
            <ScrollRail>
              <RailEnd>
                <ChevronUp size={12} strokeWidth={1.4} />
              </RailEnd>
              <RailThumb $top={19} $h={25} />
              <RailEnd $bottom>
                <ChevronDown size={12} strokeWidth={1.4} />
              </RailEnd>
            </ScrollRail>
          </PagesSection>
          <PanelFooter>
            3 Muster
            <FooterTools>
              <NewFromMaster />
              <SquarePlus size={14} />
              <Trash2 size={14} />
            </FooterTools>
          </PanelFooter>
          <PanelResize>
            <Grip />
          </PanelResize>
          <Marker $l={-28} $t={140} $w={142} $h={81} />
          <Marker $l={82} $t={302} $w={155} $h={78} />
        </PagesPanel>
      </Main>
    </AppFrame>
  );
}
